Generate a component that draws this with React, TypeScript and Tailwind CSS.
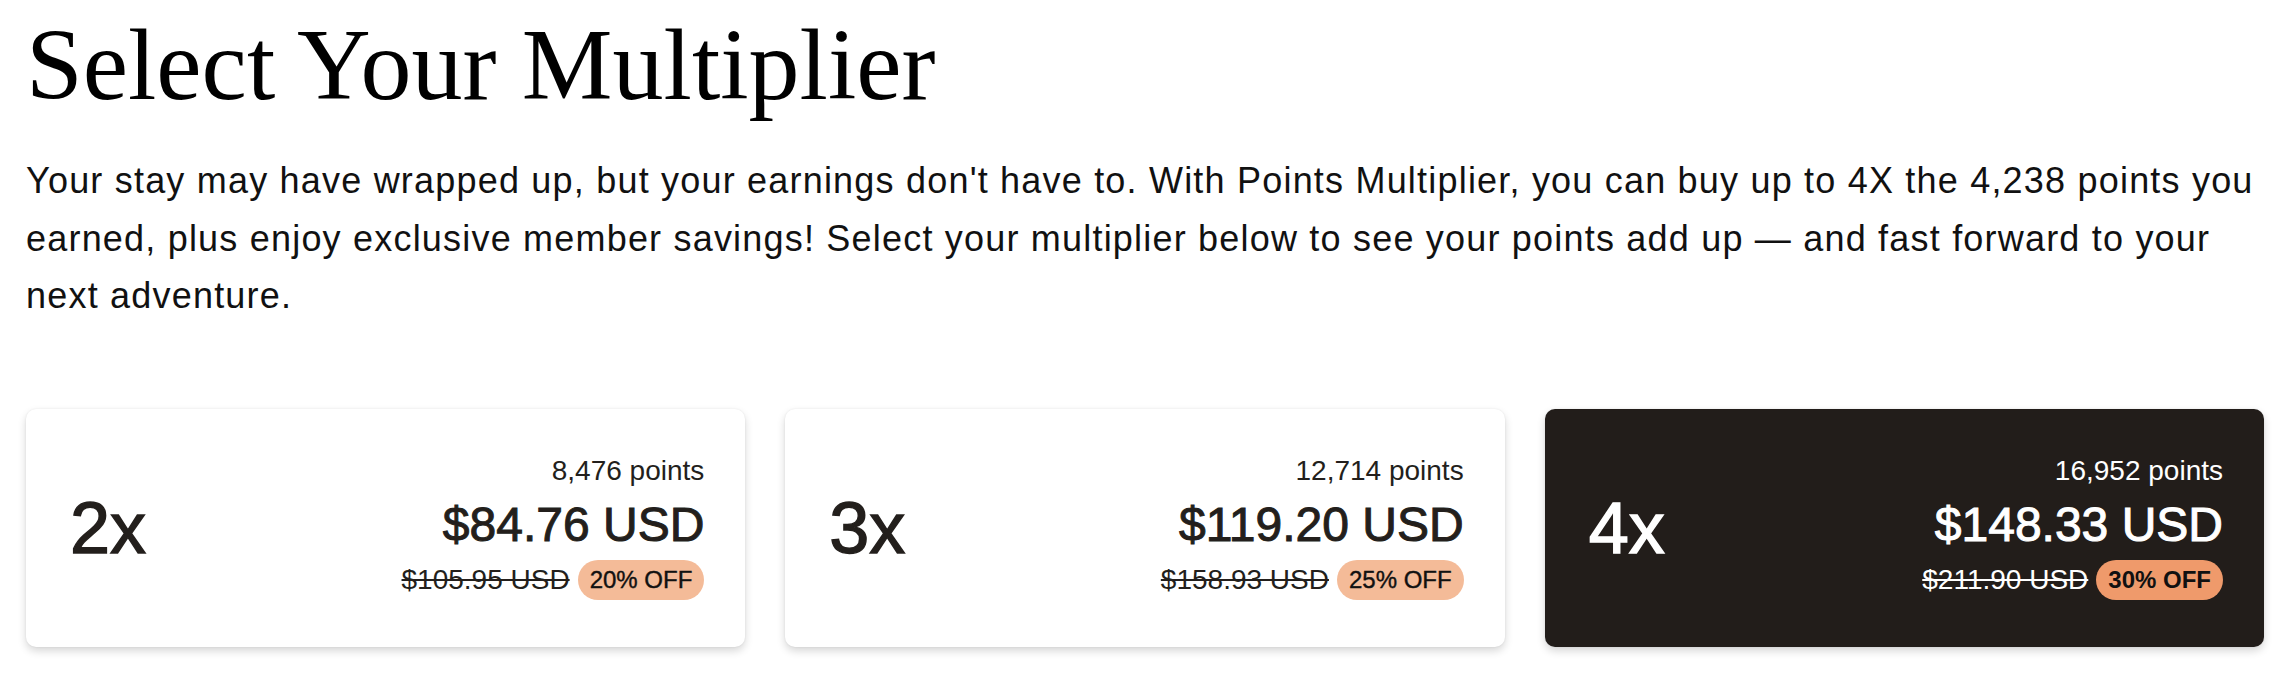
import React from "react"

type Option = {
  mult: string
  points: string
  price: string
  was: string
  off: string
  selected?: boolean
}

const OPTIONS: Option[] = [
  { mult: "2x", points: "8,476 points", price: "$84.76 USD", was: "$105.95 USD", off: "20% OFF" },
  { mult: "3x", points: "12,714 points", price: "$119.20 USD", was: "$158.93 USD", off: "25% OFF" },
  { mult: "4x", points: "16,952 points", price: "$148.33 USD", was: "$211.90 USD", off: "30% OFF", selected: true },
]

function MultiplierCard({ o }: { o: Option }) {
  const dark = !!o.selected
  return (
    <button
      type="button"
      className={
        "flex h-[238px] items-center justify-between rounded-[10px] pl-[44px] pr-[41px] text-left shadow-[0_4px_9px_rgba(0,0,0,0.16),0_0_2px_rgba(0,0,0,0.08)] " +
        (dark ? "bg-[#221d1a] text-white" : "bg-white text-[#231f1c]")
      }
    >
      <span className="text-[72px] leading-none [-webkit-text-stroke:1.4px_currentColor]">{o.mult}</span>
      <div className="flex flex-col items-end">
        <span className="mb-[10px] text-[28px] leading-[32px]">{o.points}</span>
        <span className="mb-[8px] text-[48px] leading-[55px] [-webkit-text-stroke:1px_currentColor]">{o.price}</span>
        <div className="flex items-center gap-[8px]">
          <span className="text-[28px] leading-[32px] line-through">{o.was}</span>
          <span
            className={
              "rounded-full px-[12px] py-[6px] text-[24px] leading-[28px] text-[#111] " +
              (dark ? "bg-[#ef9a6b] font-bold" : "bg-[#f4bb98] [-webkit-text-stroke:0.4px_currentColor]")
            }
          >
            {o.off}
          </span>
        </div>
      </div>
    </button>
  )
}

export default function App() {
  return (
    <div className="min-h-[680px] bg-white px-[26px] font-['Liberation_Sans',Arial,sans-serif]">
      <h1 className="pt-[15px] font-['Liberation_Serif','Times_New_Roman',serif] text-[102px] leading-[100px] text-black">
        Select Your Multiplier
      </h1>
      <p className="mt-[37px] text-[36px] leading-[57.6px] tracking-[1.2px] text-[#111]">
        Your stay may have wrapped up, but your earnings don't have to. With Points Multiplier, you can buy up to 4X the
        4,238 points you earned, plus enjoy exclusive member savings! Select your multiplier below to see your points
        add up — and fast forward to your next adventure.
      </p>
      <div className="mt-[84px] grid grid-cols-3 gap-[40px]">
        {OPTIONS.map((o) => (
          <MultiplierCard key={o.mult} o={o} />
        ))}
      </div>
    </div>
  )
}
